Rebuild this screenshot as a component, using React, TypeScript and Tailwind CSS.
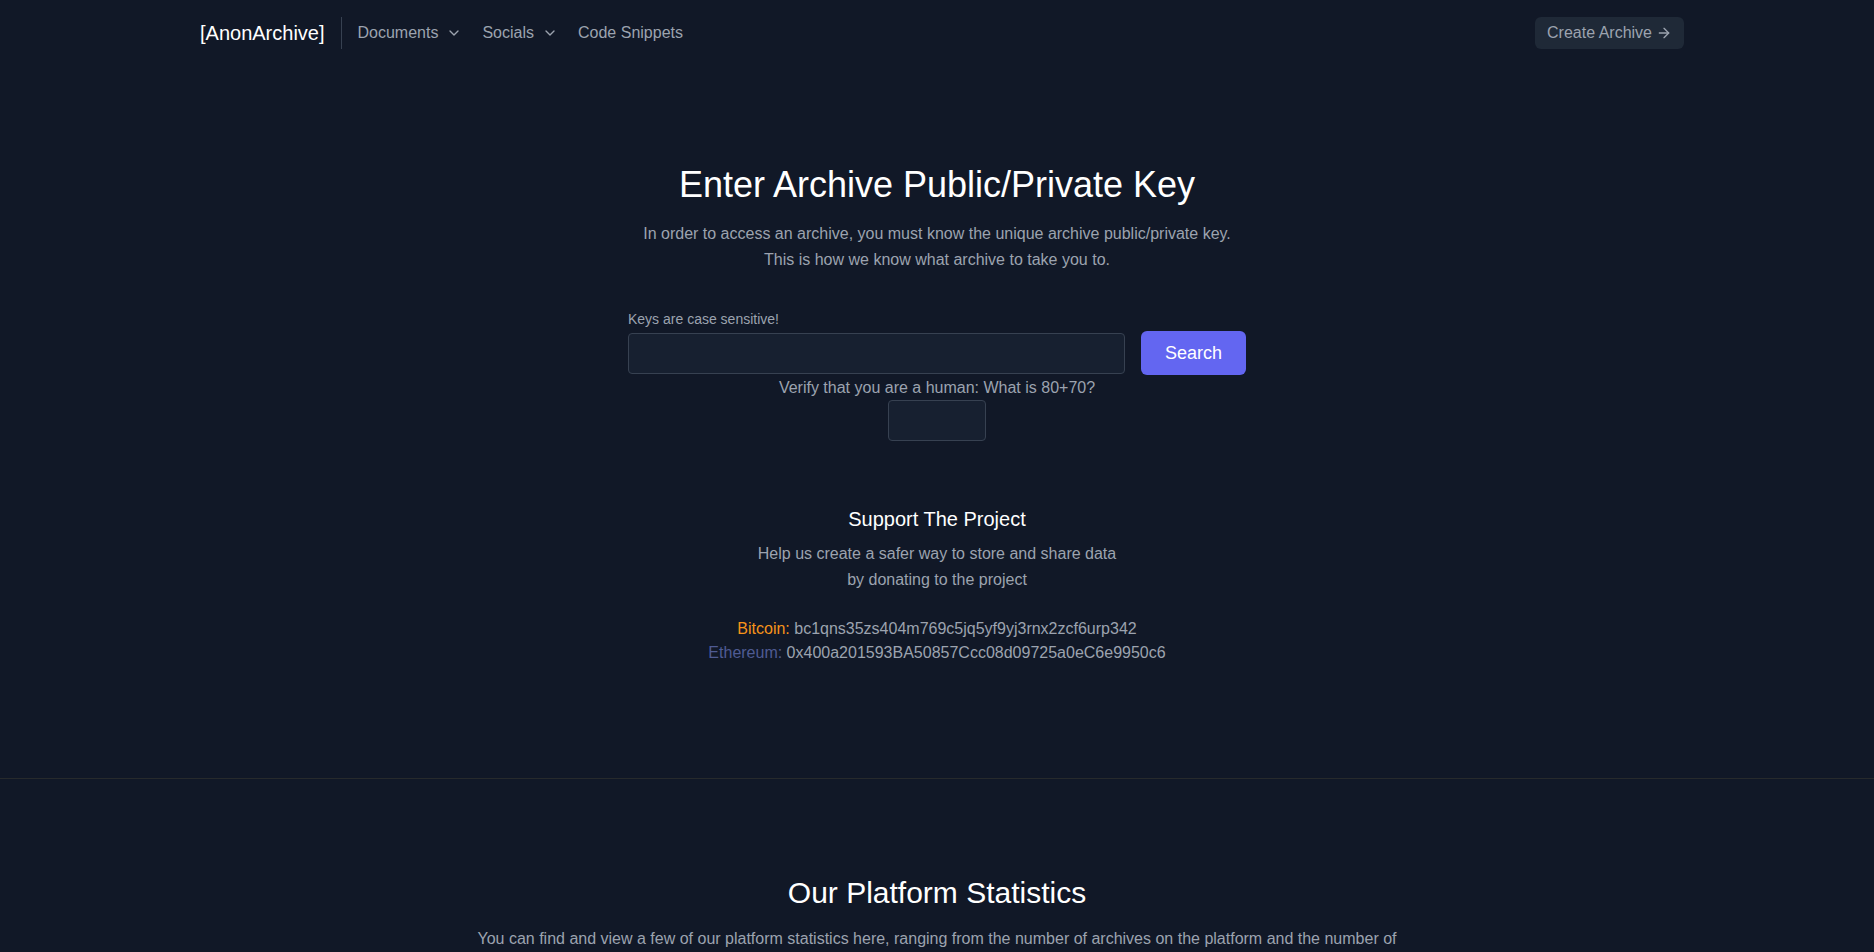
import { ArrowRight, ChevronDown } from "lucide-react";

function NavItem({ label, menu }: { label: string; menu?: boolean }) {
  return (
    <button className="flex items-center gap-2 text-base leading-6 text-[#9ca3af] hover:text-white">
      <span>{label}</span>
      {menu && <ChevronDown size={16} strokeWidth={2} />}
    </button>
  );
}

export default function App() {
  return (
    <div className="min-h-screen bg-[#111827] font-['Liberation_Sans',Arial,sans-serif] text-[#9ca3af]">
      {/* top bar */}
      <header className="flex h-[66px] items-center pl-[200px] pr-[190px]">
        <a className="text-xl leading-7 text-white">[AnonArchive]</a>
        <div className="mx-4 h-8 w-px bg-[#374151]" />
        <nav className="flex items-center gap-5">
          <NavItem label="Documents" menu />
          <NavItem label="Socials" menu />
          <NavItem label="Code Snippets" />
        </nav>
        <button className="ml-auto flex items-center gap-1 rounded-md bg-[#1f2937] px-3 py-1 text-base leading-6 text-[#9ca3af]">
          Create Archive
          <ArrowRight size={16} strokeWidth={2} />
        </button>
      </header>

      {/* key search */}
      <section className="flex flex-col items-center border-b border-[#272a2c] pt-[99px] pb-[113px] text-center">
        <h1 className="text-4xl leading-10 text-white">Enter Archive Public/Private Key</h1>
        <p className="mt-4 text-base leading-[26px]">
          In order to access an archive, you must know the unique archive public/private key.
          <br />
          This is how we know what archive to take you to.
        </p>

        <div className="mt-[36px] w-[618px] text-left">
          <label className="mb-0.5 block text-sm leading-5">Keys are case sensitive!</label>
          <div className="flex items-center gap-4">
            <input
              type="text"
              className="h-[41px] flex-1 rounded border border-[#374151] bg-[#172030] px-3 text-white outline-none"
            />
            <button className="h-11 rounded-md bg-[#6366f1] px-6 text-lg leading-7 text-white">Search</button>
          </div>
        </div>
        <p className="text-base leading-[25px]">Verify that you are a human: What is 80+70?</p>
        <input
          type="text"
          className="h-[41px] w-[98px] rounded border border-[#374151] bg-[#172030] px-2 text-white outline-none"
        />

        <h2 className="mt-16 text-xl leading-7 text-white">Support The Project</h2>
        <p className="mt-2 text-base leading-[26px]">
          Help us create a safer way to store and share data
          <br />
          by donating to the project
        </p>
        <div className="mt-6 text-base leading-6">
          <p>
            <span className="text-[#f7931a]">Bitcoin:</span> bc1qns35zs404m769c5jq5yf9yj3rnx2zcf6urp342
          </p>
          <p>
            <span className="text-[#4f5b93]">Ethereum:</span> 0x400a201593BA50857Ccc08d09725a0eC6e9950c6
          </p>
        </div>
      </section>

      {/* statistics */}
      <section className="flex flex-col items-center pt-24 pb-24 text-center">
        <h2 className="text-3xl leading-9 text-white">Our Platform Statistics</h2>
        <p className="mt-4 max-w-[940px] text-base leading-6">
          You can find and view a few of our platform statistics here, ranging from the number of archives on the
          platform and the number of total views across every archive that has been created.
        </p>
      </section>
    </div>
  );
}
